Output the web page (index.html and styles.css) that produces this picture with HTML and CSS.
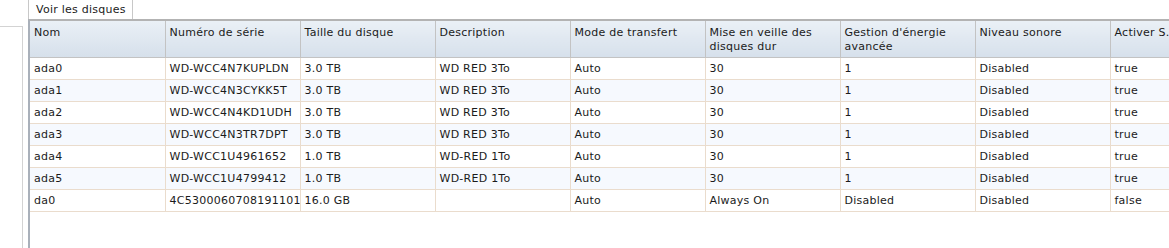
FILE: index.html
```html
<!DOCTYPE html>
<html lang="fr">
<head>
<meta charset="utf-8">
<link rel="stylesheet" href="styles.css">
</head>
<body>
<div class="page">
  <div class="side"></div>
  <div class="main">
    <div class="tabs"><div class="tab">Voir les disques</div></div>
    <div class="grid">
      <table>
        <colgroup>
          <col><col><col><col><col><col><col><col><col>
        </colgroup>
        <thead>
          <tr>
            <th>Nom</th><th>Numéro de série</th><th>Taille du disque</th><th>Description</th><th>Mode de transfert</th><th>Mise en veille des disques dur</th><th>Gestion d'énergie avancée</th><th>Niveau sonore</th><th>Activer S.M.A.R.T.</th>
          </tr>
        </thead>
        <tbody>
          <tr><td>ada0</td><td>WD-WCC4N7KUPLDN</td><td>3.0 TB</td><td>WD RED 3To</td><td>Auto</td><td>30</td><td>1</td><td>Disabled</td><td>true</td></tr>
          <tr class="alt"><td>ada1</td><td>WD-WCC4N3CYKK5T</td><td>3.0 TB</td><td>WD RED 3To</td><td>Auto</td><td>30</td><td>1</td><td>Disabled</td><td>true</td></tr>
          <tr><td>ada2</td><td>WD-WCC4N4KD1UDH</td><td>3.0 TB</td><td>WD RED 3To</td><td>Auto</td><td>30</td><td>1</td><td>Disabled</td><td>true</td></tr>
          <tr class="alt"><td>ada3</td><td>WD-WCC4N3TR7DPT</td><td>3.0 TB</td><td>WD RED 3To</td><td>Auto</td><td>30</td><td>1</td><td>Disabled</td><td>true</td></tr>
          <tr><td>ada4</td><td>WD-WCC1U4961652</td><td>1.0 TB</td><td>WD-RED 1To</td><td>Auto</td><td>30</td><td>1</td><td>Disabled</td><td>true</td></tr>
          <tr class="alt"><td>ada5</td><td>WD-WCC1U4799412</td><td>1.0 TB</td><td>WD-RED 1To</td><td>Auto</td><td>30</td><td>1</td><td>Disabled</td><td>true</td></tr>
          <tr><td>da0</td><td>4C530006070819110195</td><td>16.0 GB</td><td></td><td>Auto</td><td>Always On</td><td>Disabled</td><td>Disabled</td><td>false</td></tr>
        </tbody>
      </table>
    </div>
  </div>
</div>
</body>
</html>
```

FILE: styles.css
```css
html, body {
  margin: 0;
  padding: 0;
  background: #ffffff;
}
body {
  font-family: "DejaVu Sans", Verdana, sans-serif;
  font-size: 11px;
  letter-spacing: 0.25px;
  color: #1b1b1b;
  width: 1169px;
  height: 248px;
  overflow: hidden;
}
.page {
  display: flex;
  height: 248px;
}
.side {
  width: 22px;
  margin-top: 26px;
  border-top: 1px solid #d3d3d3;
  border-right: 1px solid #d3d3d3;
  flex: none;
}
.main {
  margin-left: 5px;
  flex: 1;
  min-width: 0;
  display: flex;
  flex-direction: column;
}
.tabs {
  height: 19px;
  display: flex;
  flex: none;
}
.tab {
  padding: 0 6px 0 7px;
  line-height: 19px;
  border-left: 1px solid #c8c8c8;
  border-right: 1px solid #c8c8c8;
  background: #ffffff;
  white-space: nowrap;
}
.grid {
  flex: 1;
  border-top: 2px solid #b3b3b3;
  border-left: 2px solid #a9b0ba;
  overflow: hidden;
}
table {
  border-collapse: collapse;
  table-layout: fixed;
  width: 1215px;
}
col {
  width: 135px;
}
th {
  height: 36px;
  box-sizing: border-box;
  padding: 5px 4px 0 4px;
  text-align: left;
  vertical-align: top;
  font-weight: normal;
  line-height: 14px;
  background: linear-gradient(#eaf0f6, #d6e0eb);
  border-right: 1px solid #c3c3c3;
  border-bottom: 1px solid #c3c3c3;
  overflow: hidden;
}
td {
  height: 22px;
  box-sizing: border-box;
  padding: 0 4px;
  white-space: nowrap;
  overflow: hidden;
  border-right: 1px solid #eadccd;
  border-bottom: 1px solid #eadccd;
  line-height: 21px;
}
tr.alt td {
  background: #f6f9fe;
}
```
